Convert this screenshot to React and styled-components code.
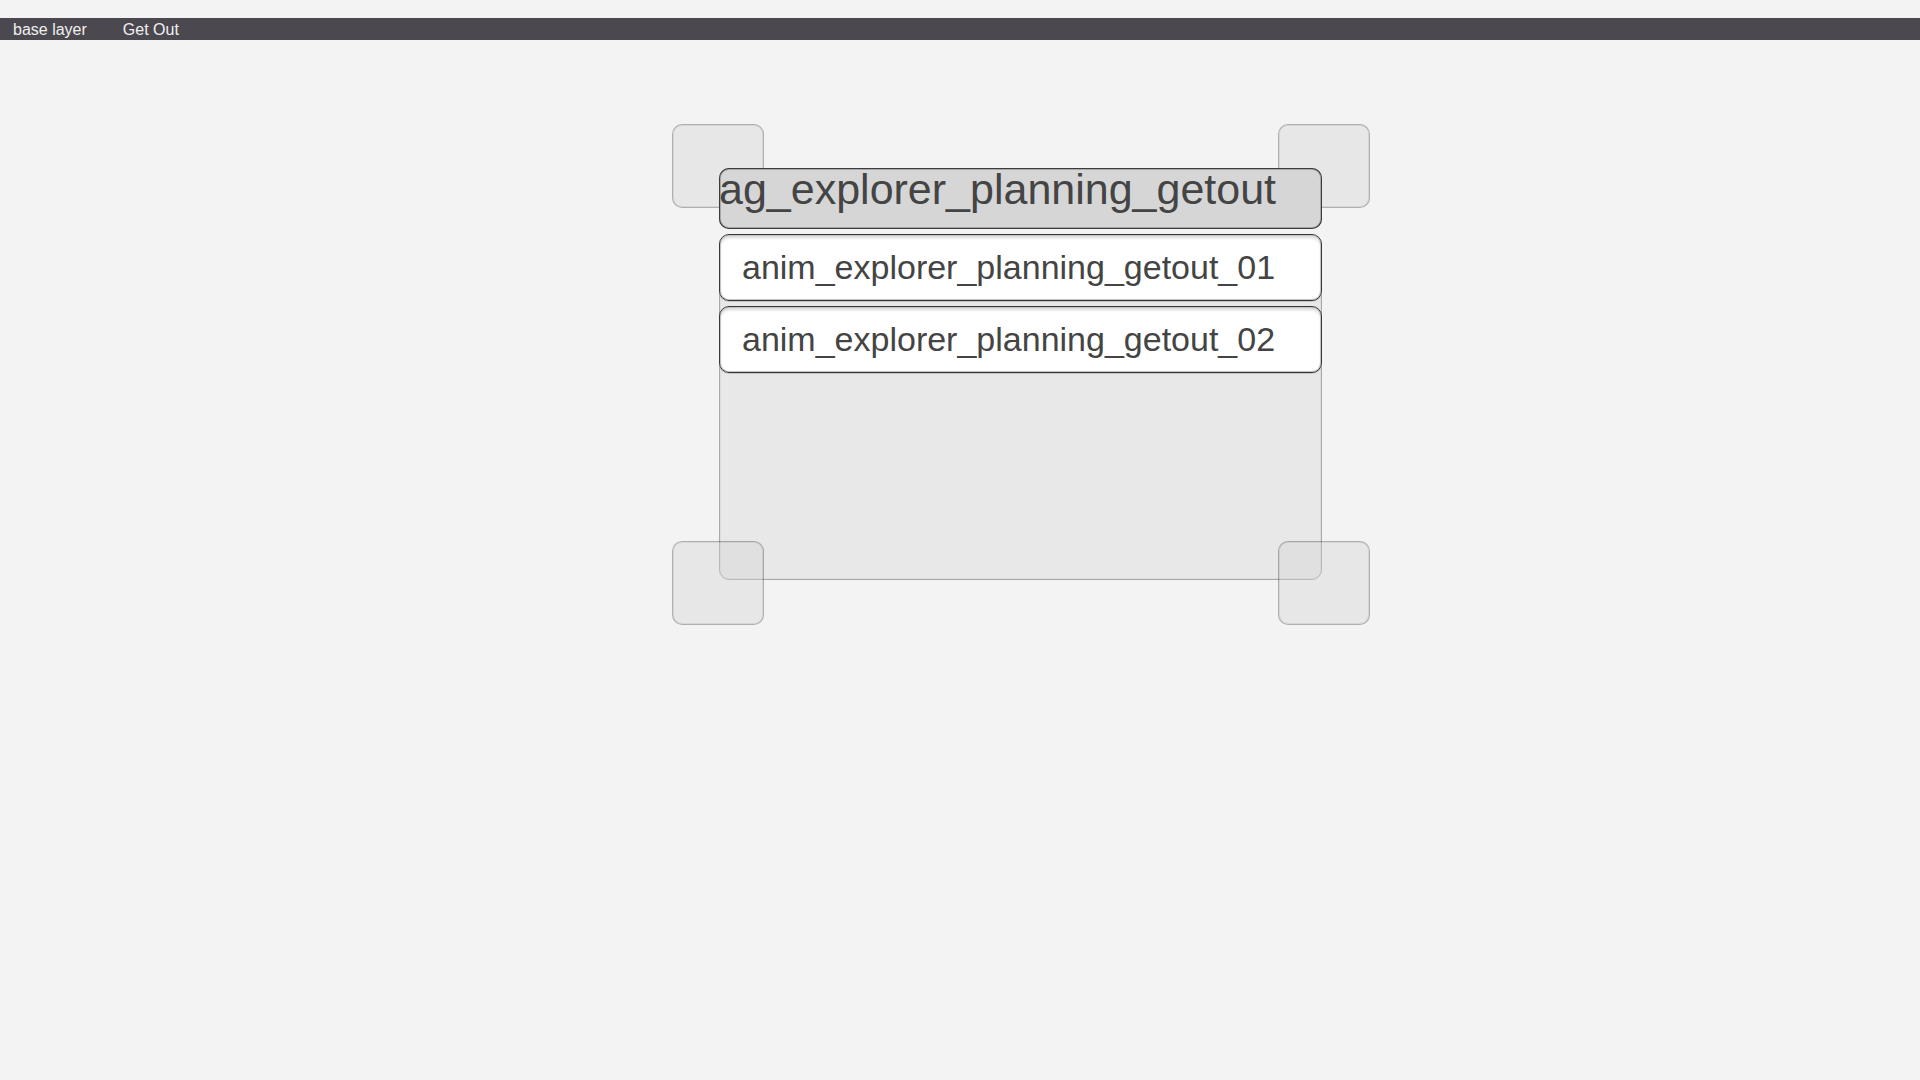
import React from "react";
import styled, { createGlobalStyle } from "styled-components";

const GlobalStyle = createGlobalStyle`
  *, *::before, *::after { box-sizing: border-box; }
  body {
    margin: 0;
    background: #f3f3f3;
    font-family: "Liberation Sans", Arial, sans-serif;
  }
`;

const Page = styled.div`
  display: flex;
  flex-direction: column;
  min-height: 100vh;
  padding-top: 18px;
`;

const LayerBar = styled.nav`
  display: flex;
  align-items: center;
  gap: 36px;
  height: 22px;
  padding: 2px 13px 0;
  background: #4b494f;
`;

const Crumb = styled.button`
  padding: 0;
  border: 0;
  background: none;
  color: #f0f0f0;
  font: 16px/20px "Liberation Sans", Arial, sans-serif;
  white-space: nowrap;
  cursor: pointer;
`;

const Canvas = styled.main`
  position: relative;
  flex: 1;
`;

/* A node sits freely on the canvas; its handles straddle its corners. */
const Node = styled.section`
  position: absolute;
  left: ${(p) => p.$x}px;
  top: ${(p) => p.$y}px;
  width: 603px;
  height: 412px;
`;

const NodeBody = styled.div`
  position: absolute;
  inset: 72px 0 0;
  border: 1px solid #a9a9a9;
  border-radius: 10px;
  box-shadow: inset 0 0 0 1px rgba(0, 0, 0, 0.05);
  background: #e8e8e8;
`;

const NodeContent = styled.div`
  position: relative;
  display: flex;
  flex-direction: column;
  gap: 5px;
`;

const Title = styled.h1`
  height: 61px;
  margin: 0;
  border-radius: 10px;
  box-shadow: inset 0 0 0 1px #3c3a3e, inset 0 0 0 2px #a8a8a8;
  background: #d6d6d6;
  color: #444444;
  font-size: 43px;
  font-weight: 400;
  line-height: 42px;
  white-space: nowrap;
`;

const ClipList = styled.ul`
  display: flex;
  flex-direction: column;
  gap: 5px;
  margin: 0;
  padding: 0;
  list-style: none;
`;

const Clip = styled.li`
  height: 67px;
  padding: 0 22px;
  border: 1px solid #38363a;
  border-radius: 10px;
  box-shadow: inset 0 0 0 1px #c4c2c4, inset 0 3px 3px #dcdadc, 0 1px 0 #c4c4c4;
  background: #ffffff;
  color: #444444;
  font-size: 34px;
  line-height: 64px;
  white-space: nowrap;
`;

const Handle = styled.span`
  position: absolute;
  ${(p) => (p.$v === "top" ? "top: -44px" : "bottom: -45px")};
  ${(p) => (p.$h === "left" ? "left: -47px" : "right: -48px")};
  width: 92px;
  height: 84px;
  border: 1px solid rgba(0, 0, 0, 0.28);
  border-radius: 10px;
  box-shadow: inset 0 0 0 1px rgba(0, 0, 0, 0.08);
  background: rgba(210, 210, 210, 0.36);
  background-clip: padding-box;
`;

const clips = [
  "anim_explorer_planning_getout_01",
  "anim_explorer_planning_getout_02",
];

export default function App() {
  return (
    <>
      <GlobalStyle />
      <Page>
        <LayerBar aria-label="Layers">
          <Crumb type="button">base layer</Crumb>
          <Crumb type="button">Get Out</Crumb>
        </LayerBar>
        <Canvas>
          <Node $x={719} $y={128}>
            <Handle $v="top" $h="left" />
            <Handle $v="top" $h="right" />
            <NodeBody />
            <NodeContent>
              <Title>ag_explorer_planning_getout</Title>
              <ClipList>
                {clips.map((name) => (
                  <Clip key={name}>{name}</Clip>
                ))}
              </ClipList>
            </NodeContent>
            <Handle $v="bottom" $h="left" />
            <Handle $v="bottom" $h="right" />
          </Node>
        </Canvas>
      </Page>
    </>
  );
}
